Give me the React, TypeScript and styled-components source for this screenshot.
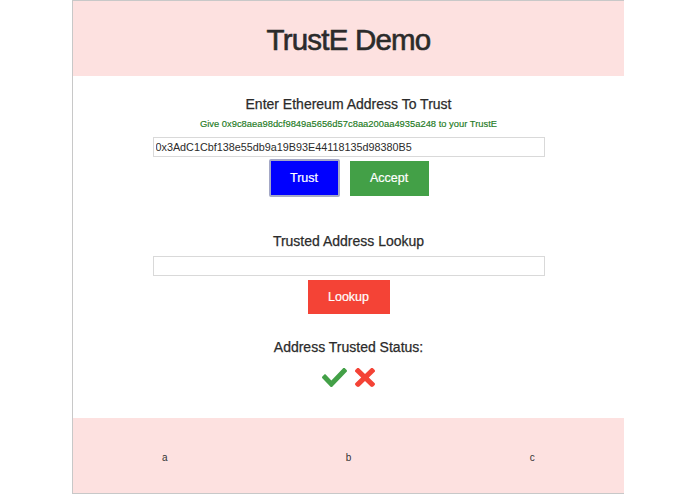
import styled, { createGlobalStyle } from 'styled-components';

const GlobalStyle = createGlobalStyle`
  html, body {
    margin: 0;
    padding: 0;
    background: #ffffff;
    font-family: "Liberation Sans", Arial, Helvetica, sans-serif;
  }
`;

const Frame = styled.div`
  margin-left: 72px;
  width: 551px;
  height: 492px;
  border-left: 1px solid #c8c8c8;
  border-top: 1px solid #c8c8c8;
  border-bottom: 1px solid #c8c8c8;
  display: flex;
  flex-direction: column;
`;

const Header = styled.header`
  height: 75px;
  background-color: #fde1e0;
  display: flex;
  align-items: center;
  justify-content: center;
`;

const Title = styled.h1`
  margin: 0;
  padding-top: 3px;
  font-size: 29.5px;
  font-weight: 400;
  letter-spacing: -0.8px;
  color: #2b2b2b;
  -webkit-text-stroke: 0.6px #2b2b2b;
`;

const Main = styled.main`
  flex: 1;
  display: flex;
  flex-direction: column;
  align-items: center;
`;

const Heading = styled.h2<{ $top: number }>`
  margin: ${(props) => props.$top}px 0 0;
  font-size: 14px;
  line-height: 16px;
  font-weight: 400;
  color: #2b2b2b;
  -webkit-text-stroke: 0.25px #2b2b2b;
`;

const Hint = styled.p`
  margin: 7px 0 0;
  font-size: 9.4px;
  line-height: 10px;
  color: #237a23;
  -webkit-text-stroke: 0.15px #237a23;
`;

const AddressInput = styled.input<{ $top: number }>`
  box-sizing: border-box;
  margin-top: ${(props) => props.$top}px;
  width: 392px;
  height: 20px;
  padding: 0 2px;
  border: 1px solid #d9d9d9;
  font-family: "Liberation Sans", Arial, sans-serif;
  font-size: 10.8px;
  color: #2b2b2b;
  outline: none;
`;

const ButtonRow = styled.div`
  display: flex;
  align-items: center;
  gap: 10px;
  margin-top: 2px;
  height: 38px;
`;

const ActionButton = styled.button<{ $bg: string; $w: number; $h: number; $ring?: boolean }>`
  box-sizing: border-box;
  width: ${(props) => props.$w}px;
  height: ${(props) => props.$h}px;
  background-color: ${(props) => props.$bg};
  border: ${(props) => (props.$ring ? '2px solid #a4a8c6' : 'none')};
  border-radius: ${(props) => (props.$ring ? '2px' : '0')};
  color: #ffffff;
  font-family: "Liberation Sans", Arial, sans-serif;
  font-size: 12.5px;
  -webkit-text-stroke: 0.2px #ffffff;
  padding: 0;
  cursor: pointer;
`;

const LookupWrap = styled.div`
  margin-top: 4px;
`;

const StatusIcons = styled.div`
  display: flex;
  align-items: center;
  gap: 8px;
  margin-top: 13px;
`;

const Footer = styled.footer`
  height: 75px;
  background-color: #fde1e0;
  display: grid;
  grid-template-columns: repeat(3, 1fr);
  align-items: center;
`;

const FooterCell = styled.div`
  text-align: center;
  font-size: 10px;
  color: #333333;
  padding-top: 3px;
`;

function CheckIcon() {
  return (
    <svg width="25" height="19" viewBox="0 70 512 372" preserveAspectRatio="none">
      <path
        fill="#43a047"
        d="M173.898 439.404l-166.4-166.4c-9.997-9.997-9.997-26.206 0-36.204l36.203-36.204c9.997-9.998 26.207-9.998 36.204 0L192 312.69 432.095 72.596c9.997-9.997 26.207-9.997 36.204 0l36.203 36.204c9.997 9.997 9.997 26.206 0 36.204l-294.4 294.401c-9.998 9.997-26.207 9.997-36.204-.001z"
      />
    </svg>
  );
}

function CrossIcon() {
  return (
    <svg width="20" height="19" viewBox="0 80 352 352" preserveAspectRatio="none">
      <path
        fill="#f44336"
        d="M242.72 256l100.07-100.07c12.28-12.28 12.28-32.19 0-44.48l-22.24-22.24c-12.28-12.28-32.19-12.28-44.48 0L176 189.28 75.93 89.21c-12.280-12.28-32.19-12.28-44.48 0L9.21 111.45c-12.28 12.28-12.28 32.19 0 44.48L109.28 256 9.21 356.07c-12.28 12.28-12.28 32.19 0 44.48l22.24 22.24c12.28 12.28 32.2 12.28 44.48 0L176 322.72l100.07 100.07c12.28 12.28 32.2 12.28 44.48 0l22.24-22.24c12.28-12.28 12.28-32.19 0-44.48L242.72 256z"
      />
    </svg>
  );
}

function App() {
  return (
    <>
      <GlobalStyle />
      <Frame>
        <Header>
          <Title>TrustE Demo</Title>
        </Header>
        <Main>
          <Heading $top={20}>Enter Ethereum Address To Trust</Heading>
          <Hint>Give 0x9c8aea98dcf9849a5656d57c8aa200aa4935a248 to your TrustE</Hint>
          <AddressInput
            $top={8}
            type="text"
            defaultValue="0x3AdC1Cbf138e55db9a19B93E44118135d98380B5"
          />
          <ButtonRow>
            <ActionButton $bg="#0000ff" $w={71} $h={38} $ring>
              Trust
            </ActionButton>
            <ActionButton $bg="#43a047" $w={79} $h={35}>
              Accept
            </ActionButton>
          </ButtonRow>

          <Heading $top={36}>Trusted Address Lookup</Heading>
          <AddressInput $top={7} type="text" />
          <LookupWrap>
            <ActionButton $bg="#f44336" $w={82} $h={34}>
              Lookup
            </ActionButton>
          </LookupWrap>

          <Heading $top={25}>Address Trusted Status:</Heading>
          <StatusIcons>
            <CheckIcon />
            <CrossIcon />
          </StatusIcons>
        </Main>
        <Footer>
          <FooterCell>a</FooterCell>
          <FooterCell>b</FooterCell>
          <FooterCell>c</FooterCell>
        </Footer>
      </Frame>
    </>
  );
}

export default App;
